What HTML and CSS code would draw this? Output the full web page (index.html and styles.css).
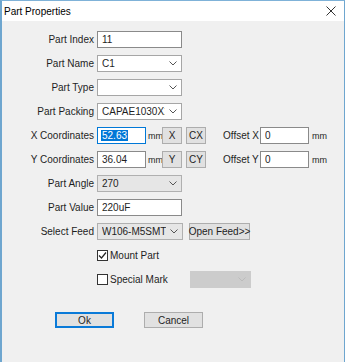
FILE: index.html
```html
<!DOCTYPE html>
<html>
<head>
<meta charset="utf-8">
<title>Part Properties</title>
<link rel="stylesheet" href="styles.css">
</head>
<body>
<div class="window">
  <div class="titlebar">
    <span class="title">Part Properties</span>
    <svg class="close" width="10" height="10" viewBox="0 0 10 10"><path d="M0.5 0.5L9.5 9.5M9.5 0.5L0.5 9.5" stroke="#333" stroke-width="1" fill="none"/></svg>
  </div>
  <div class="body">
    <div class="row"><span class="lbl">Part Index</span><div class="box w85"><span class="txt">11</span></div></div>
    <div class="row"><span class="lbl">Part Name</span><div class="box combo w85"><span class="txt">C1</span><svg class="chev" width="8" height="5" viewBox="0 0 8 5"><path d="M0.5 0.5L4 4L7.5 0.5" stroke="#555" fill="none"/></svg></div></div>
    <div class="row"><span class="lbl">Part Type</span><div class="box combo w85"><span class="txt"></span><svg class="chev" width="8" height="5" viewBox="0 0 8 5"><path d="M0.5 0.5L4 4L7.5 0.5" stroke="#555" fill="none"/></svg></div></div>
    <div class="row"><span class="lbl">Part Packing</span><div class="box combo w85"><span class="txt">CAPAE1030X105</span><svg class="chev" width="8" height="5" viewBox="0 0 8 5"><path d="M0.5 0.5L4 4L7.5 0.5" stroke="#555" fill="none"/></svg></div></div>
    <div class="row"><span class="lbl">X Coordinates</span><div class="box focus w49"><span class="txt"><span class="sel">52.63</span></span></div><span class="mm">mm</span><div class="btn small">X</div><div class="btn small gap4">CX</div><span class="olbl">Offset X</span><div class="box w49 ml2"><span class="txt">0</span></div><span class="mm2">mm</span></div>
    <div class="row"><span class="lbl">Y Coordinates</span><div class="box w49"><span class="txt">36.04</span></div><span class="mm">mm</span><div class="btn small">Y</div><div class="btn small gap4">CY</div><span class="olbl">Offset Y</span><div class="box w49 ml2"><span class="txt">0</span></div><span class="mm2">mm</span></div>
    <div class="row"><span class="lbl">Part Angle</span><div class="box combo grey w85"><span class="txt">270</span><svg class="chev" width="8" height="5" viewBox="0 0 8 5"><path d="M0.5 0.5L4 4L7.5 0.5" stroke="#555" fill="none"/></svg></div></div>
    <div class="row"><span class="lbl">Part Value</span><div class="box w85"><span class="txt">220uF</span></div></div>
    <div class="row"><span class="lbl">Select Feed</span><div class="box combo grey w86"><span class="txt">W106-M5SMT125</span><svg class="chev" width="8" height="5" viewBox="0 0 8 5"><path d="M0.5 0.5L4 4L7.5 0.5" stroke="#555" fill="none"/></svg></div><div class="btn feed">Open Feed&gt;&gt;</div></div>
    <div class="row indent"><span class="check on"><svg width="9" height="9" viewBox="0 0 9 9"><path d="M1 4.5L3.5 7L8 1.5" stroke="#222" stroke-width="1.2" fill="none"/></svg></span><span class="clbl">Mount Part</span></div>
    <div class="row indent"><span class="check"></span><span class="clbl">Special Mark</span><div class="box combo disabled w61"><span class="txt"></span><svg class="chev" width="8" height="5" viewBox="0 0 8 5"><path d="M0.5 0.5L4 4L7.5 0.5" stroke="#bbb" fill="none"/></svg></div></div>
    <div class="row buttons"><div class="btn dlg default">Ok</div><div class="btn dlg cancel">Cancel</div></div>
  </div>
</div>
</body>
</html>
```
FILE: styles.css
```css
* { box-sizing: border-box; }
body {
  margin: 0;
  background: #f0f0f0;
  font-family: "Liberation Sans", Arial, sans-serif;
  font-size: 10px;
  color: #1e1e1e;
}
.window {
  width: 345px;
  height: 362px;
  background: #f0f0f0;
  border-top: 1px solid #7fb2d8;
  border-left: 2px solid #6ea6cf;
  border-right: 1px solid #6ea6cf;
  display: flex;
  flex-direction: column;
}
.titlebar {
  height: 20px;
  background: #fff;
  display: flex;
  align-items: center;
  justify-content: space-between;
  padding: 0 8px 0 2px;
  flex-shrink: 0;
}
.title {
  font-size: 10px;
  color: #000;
}
.close { display: block; }
.body {
  padding-top: 10px;
  display: flex;
  flex-direction: column;
  gap: 7px;
}
.row {
  display: flex;
  align-items: center;
  height: 17px;
}
.lbl {
  width: 92px;
  margin-right: 3px;
  text-align: right;
  white-space: nowrap;
}
.box {
  height: 17px;
  border: 1px solid #8a8a8a;
  background: #fff;
  display: flex;
  align-items: center;
  padding-left: 4px;
  overflow: hidden;
}
.txt {
  flex: 1;
  white-space: nowrap;
  overflow: hidden;
}
.combo { border-color: #a6a6a6; padding-right: 4px; }
.combo .txt { margin-right: 4px; }
.chev { flex-shrink: 0; }
.grey { background: #e6e6e6; border-color: #b0b0b0; }
.disabled { background: #cccccc; border-color: #cccccc; }
.focus { border-color: #0078d7; padding-left: 3px; }
.sel { background: #0078d7; color: #fff; padding: 1px 1px; }
.w85 { width: 85px; }
.w86 { width: 86px; }
.w49 { width: 49px; }
.w61 { width: 61px; }
.ml2 { margin-left: 2px; }
.mm { width: 14px; margin-left: 2px; font-size: 9px; }
.mm2 { margin-left: 3px; font-size: 9px; }
.olbl {
  width: 35px;
  margin-left: 17px;
  text-align: right;
  white-space: nowrap;
}
.btn {
  height: 17px;
  background: #e1e1e1;
  border: 1px solid #adadad;
  display: flex;
  align-items: center;
  justify-content: center;
  white-space: nowrap;
}
.small { width: 20px; }
.gap4 { margin-left: 4px; }
.feed { width: 61px; margin-left: 6px; }
.indent { padding-left: 95px; }
.check {
  width: 11px;
  height: 11px;
  border: 1px solid #333;
  background: #fff;
  display: flex;
  align-items: center;
  justify-content: center;
}
.check svg { display: block; }
.clbl { margin-left: 2px; }
.indent .clbl:nth-child(2) { width: 80px; }
.buttons {
  margin-top: 17px;
  padding-left: 53px;
  height: 16px;
}
.dlg { width: 59px; height: 16px; }
.default { border: 2px solid #0a7ad8; }
.cancel { margin-left: 30px; }
```
